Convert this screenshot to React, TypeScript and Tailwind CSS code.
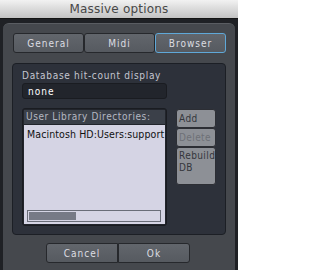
import React from "react";

const F = { fontFamily: '"DejaVu Sans Condensed", "DejaVu Sans", sans-serif' } as React.CSSProperties;

function Tab({ label, active }: { label: string; active?: boolean }) {
  return (
    <div
      className={
        "flex-1 h-full flex items-center justify-center text-[10px] tracking-[1px] text-[#dcdde2] bg-gradient-to-b from-[#62666c] to-[#565a60] rounded-[3px] border " +
        (active ? "border-[#5fa8d8]" : "border-[#26282c]")
      }
    >
      {label}
    </div>
  );
}

function SideBtn({ label, disabled, tall }: { label: React.ReactNode; disabled?: boolean; tall?: boolean }) {
  return (
    <div
      className={
        "w-[40px] rounded-[3px] border border-[#2c2e34] bg-[#8d9096] pl-[2px] text-[10px] tracking-[0.4px] leading-[12px] whitespace-nowrap " +
        (tall ? "h-[38px] pt-[2px] " : "h-[19px] flex items-center ") +
        (disabled ? "text-[#6d7076]" : "text-[#34363c]")
      }
    >
      {label}
    </div>
  );
}

export default function App() {
  return (
    <div className="w-[238px] h-[270px] bg-[#1f2125] flex flex-col overflow-hidden" style={F}>
      <div
        className="h-[19px] shrink-0 bg-gradient-to-b from-[#f2f2f2] to-[#c3c3c3] flex items-center justify-center text-[12px] text-[#474747] border-b border-[#141414] tracking-[0.2px]"
        style={{ fontFamily: '"DejaVu Sans", sans-serif' }}
      >
        Massive options
      </div>
      <div className="flex-1 mt-[4px] mx-[3px] rounded-t-[6px] bg-[#45484d] border-t border-[#5a5d62] pt-[9px] pl-[9px] pr-[9px] flex flex-col">
        <div className="h-[20px] flex ml-[1px]">
          <Tab label="General" />
          <Tab label="Midi" />
          <Tab label="Browser" active />
        </div>
        <div className="mt-[10px] h-[172px] rounded-[4px] bg-[#2d313a] border border-[#1c1f25] pl-[9px] pr-[8px] pt-[6px] flex flex-col">
          <div className="text-[10px] tracking-[0.7px] text-[#c4c6cf] leading-[12px] whitespace-nowrap">Database hit-count display</div>
          <div className="mt-[1px] w-[145px] h-[16px] rounded-[3px] bg-[#22252c] border border-[#1a1c21] flex items-center pl-[5px] text-[10px] tracking-[1px] text-white">
            none
          </div>
          <div className="mt-[9px] flex gap-[9px]">
            <div className="w-[145px] h-[118px] rounded-[3px] bg-[#22252c] border border-[#1a1c21] p-[1px] flex flex-col">
              <div className="h-[14px] bg-[#3b4049] flex items-center pl-[2px] text-[10px] tracking-[0.6px] text-[#b5b8c2] leading-none whitespace-nowrap overflow-hidden">
                User Library Directories:
              </div>
              <div className="flex-1 mt-[1px] bg-[#d5d4e4] flex flex-col pb-[2px] overflow-hidden">
                <div className="pl-[3px] pt-[2px] text-[10.5px] text-[#111] whitespace-nowrap tracking-[0.1px]">
                  Macintosh HD:Users:support
                </div>
                <div className="mt-auto ml-[3px] w-[134px] h-[12px] border border-[#6a6d78] p-[1px]">
                  <div className="w-[47px] h-full bg-[#777a86]" />
                </div>
              </div>
            </div>
            <div className="flex flex-col pt-[1px]">
              <SideBtn label="Add" />
              <SideBtn label="Delete" disabled />
              <SideBtn
                tall
                label={
                  <>
                    Rebuild
                    <br />
                    DB
                  </>
                }
              />
            </div>
          </div>
        </div>
        <div className="mt-[8px] h-[20px] flex justify-center pr-[2px]">
          <div className="w-[72px] h-full rounded-l-[3px] border border-[#26282c] bg-gradient-to-b from-[#62666c] to-[#565a60] flex items-center justify-center text-[10px] tracking-[1px] text-[#dcdde2]">
            Cancel
          </div>
          <div className="w-[72px] h-full rounded-r-[3px] border border-[#26282c] bg-gradient-to-b from-[#62666c] to-[#565a60] flex items-center justify-center text-[10px] tracking-[1px] text-[#dcdde2]">
            Ok
          </div>
        </div>
      </div>
    </div>
  );
}
